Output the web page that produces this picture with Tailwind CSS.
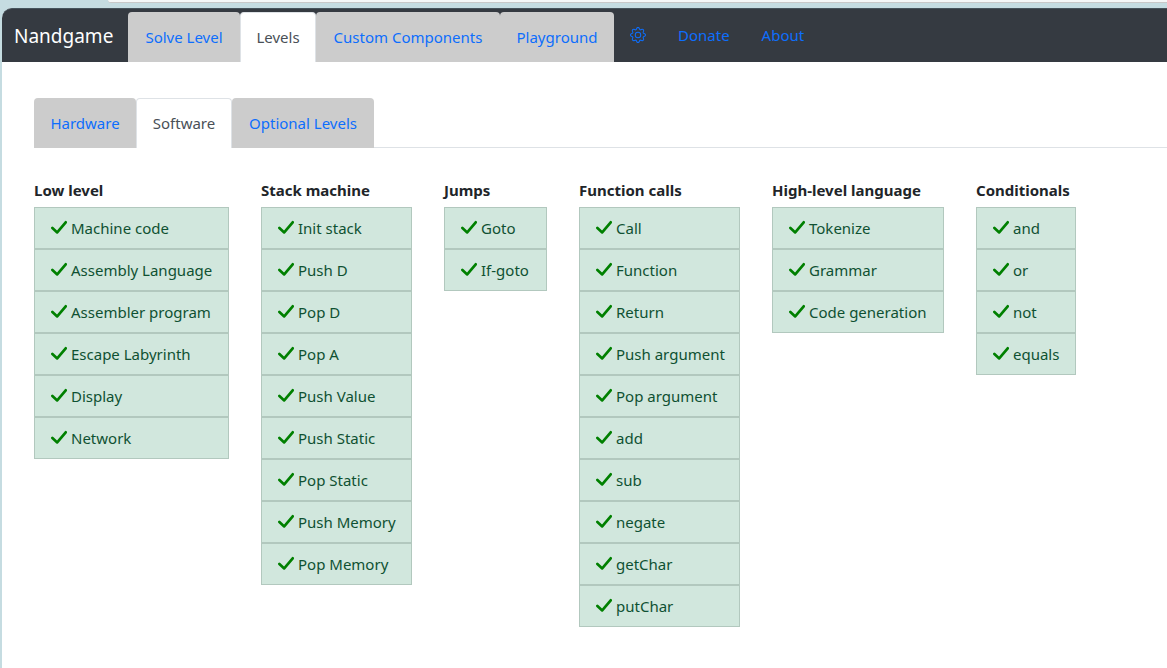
<!DOCTYPE html>
<html lang="en">
<head>
<meta charset="utf-8">
<meta name="viewport" content="width=device-width, initial-scale=1">
<title>Nandgame</title>
<script src="https://cdn.jsdelivr.net/npm/@tailwindcss/browser@4"></script>
</head>
<body class="flex min-h-screen flex-col overflow-x-hidden bg-[#c5dce1] pl-[2px] font-['Noto_Sans',sans-serif] text-[15px] leading-6 text-[#212529]">
<div class="h-2 shrink-0"><div class="ml-[106px] h-[3px] rounded-bl-lg border-b border-[#c8c8c8] bg-[#f5f7f7]"></div></div>
<div class="flex grow flex-col rounded-tl-[10px] bg-white">
  <header class="flex h-[54px] items-end rounded-tl-[10px] border-t border-[#46535b] bg-[#353a41]">
    <a href="#" class="flex h-[50px] w-[126px] shrink-0 items-center pl-3 pb-[2px] text-[19px] text-white">Nandgame</a>
    <nav class="flex h-[50px] text-[#0d6efd]" aria-label="Main">
      <a href="#" class="flex w-28 items-center justify-center rounded-t bg-[#ccc]">Solve Level</a>
      <a href="#" aria-current="page" class="flex w-[76px] items-center justify-center rounded-t border-x border-t border-[#dee2e6] bg-white pb-px text-[#495057]">Levels</a>
      <a href="#" class="flex w-[184px] items-center justify-center rounded-t bg-[#ccc]">Custom Components</a>
      <a href="#" class="flex w-[114px] items-center justify-center rounded-t bg-[#ccc]">Playground</a>
      <div class="flex items-center gap-8 pb-1 pl-4">
        <button type="button" aria-label="Settings"><svg class="block size-4" viewBox="0 0 16 16" fill="currentColor"><path d="M8 4.754a3.246 3.246 0 1 0 0 6.492 3.246 3.246 0 0 0 0-6.492M5.754 8a2.246 2.246 0 1 1 4.492 0 2.246 2.246 0 0 1-4.492 0"/><path d="M9.796 1.343c-.527-1.79-3.065-1.79-3.592 0l-.094.319a.873.873 0 0 1-1.255.52l-.292-.16c-1.64-.892-3.433.902-2.54 2.541l.159.292a.873.873 0 0 1-.52 1.255l-.319.094c-1.79.527-1.79 3.065 0 3.592l.319.094a.873.873 0 0 1 .52 1.255l-.16.292c-.892 1.64.901 3.434 2.541 2.54l.292-.159a.873.873 0 0 1 1.255.52l.094.319c.527 1.79 3.065 1.79 3.592 0l.094-.319a.873.873 0 0 1 1.255-.52l.292.16c1.64.893 3.434-.902 2.54-2.541l-.159-.292a.873.873 0 0 1 .52-1.255l.319-.094c1.79-.527 1.79-3.065 0-3.592l-.319-.094a.873.873 0 0 1-.52-1.255l.16-.292c.893-1.64-.902-3.433-2.541-2.54l-.292.159a.873.873 0 0 1-1.255-.52zm-2.633.283c.246-.835 1.428-.835 1.674 0l.094.319a1.873 1.873 0 0 0 2.693 1.115l.291-.16c.764-.415 1.6.42 1.184 1.185l-.159.292a1.873 1.873 0 0 0 1.116 2.692l.318.094c.835.246.835 1.428 0 1.674l-.319.094a1.873 1.873 0 0 0-1.115 2.693l.16.291c.415.764-.42 1.6-1.185 1.184l-.291-.159a1.873 1.873 0 0 0-2.693 1.116l-.094.318c-.246.835-1.428.835-1.674 0l-.094-.319a1.873 1.873 0 0 0-2.692-1.115l-.292.16c-.764.415-1.6-.42-1.184-1.185l.159-.291A1.873 1.873 0 0 0 1.945 8.93l-.319-.094c-.835-.246-.835-1.428 0-1.674l.319-.094A1.873 1.873 0 0 0 3.06 4.377l-.16-.292c-.415-.764.42-1.6 1.185-1.184l.292.159a1.873 1.873 0 0 0 2.692-1.115z"/></svg></button>
        <a href="#">Donate</a>
        <a href="#">About</a>
      </div>
    </nav>
  </header>
  <main class="pl-8 pt-9">
    <nav class="flex h-[50px] text-[#0d6efd]" aria-label="Level groups">
      <a href="#" class="flex w-[102px] items-center justify-center rounded-t bg-[#ccc]">Hardware</a>
      <a href="#" aria-current="page" class="flex w-24 items-center justify-center rounded-t border-x border-t border-[#dee2e6] pb-px text-[#495057]">Software</a>
      <a href="#" class="flex w-[142px] items-center justify-center rounded-t bg-[#ccc]">Optional Levels</a>
      <span class="grow border-b border-[#dee2e6]"></span>
    </nav>
    <div id="groups" class="flex items-start gap-8 pt-[30px]"></div>
  </main>
</div>
<script>
const groups = [
  ['Low level', 'w-[195px]', ['Machine code', 'Assembly Language', 'Assembler program', 'Escape Labyrinth', 'Display', 'Network']],
  ['Stack machine', 'w-[151px]', ['Init stack', 'Push D', 'Pop D', 'Pop A', 'Push Value', 'Push Static', 'Pop Static', 'Push Memory', 'Pop Memory']],
  ['Jumps', 'w-[103px]', ['Goto', 'If-goto']],
  ['Function calls', 'w-[161px]', ['Call', 'Function', 'Return', 'Push argument', 'Pop argument', 'add', 'sub', 'negate', 'getChar', 'putChar']],
  ['High-level language', 'w-[172px]', ['Tokenize', 'Grammar', 'Code generation']],
  ['Conditionals', 'w-[100px]', ['and', 'or', 'not', 'equals']],
];
const check = '<svg class="mr-1 size-4 shrink-0" viewBox="0 0 16 16" fill="none" stroke="#008000" stroke-width="2.7" stroke-linecap="round" stroke-linejoin="round" aria-hidden="true"><path d="M1.4 8 6.2 12.4 14.7 2.3"/></svg>';
document.getElementById('groups').innerHTML = groups.map(([title, width, items]) => `
  <section class="${width} shrink-0">
    <h2 class="mb-[5px] whitespace-nowrap text-[15px] leading-6 font-bold">${title}</h2>
    <ul>${items.map(item => `<li><a href="#" class="flex h-[42px] items-center whitespace-nowrap border border-[#b2c8be] bg-[#d1e7dd] pl-4 text-[#0f5132]">${check}${item}</a></li>`).join('')}</ul>
  </section>`).join('');
</script>
</body>
</html>
